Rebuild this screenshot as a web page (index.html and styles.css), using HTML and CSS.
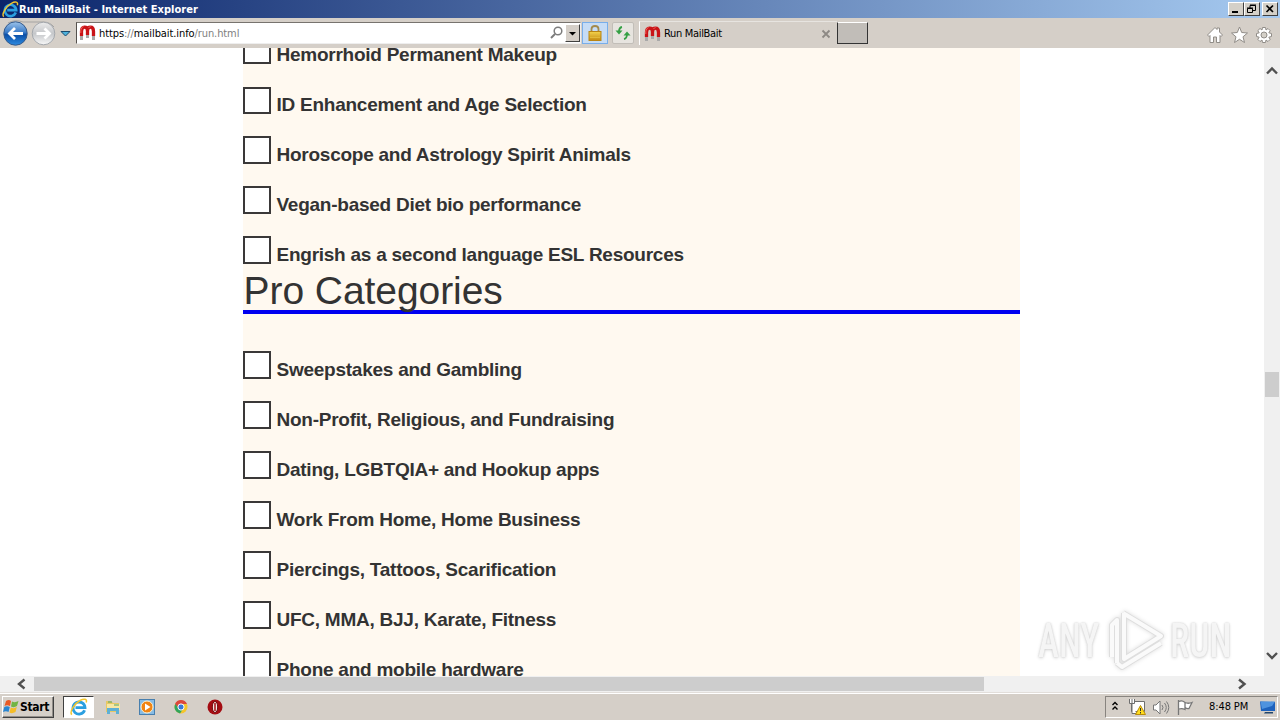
FILE: index.html
```html
<!DOCTYPE html>
<html lang="en">
<head>
<meta charset="utf-8">
<title>Run MailBait - Internet Explorer</title>
<link rel="stylesheet" href="styles.css">
</head>
<body>
<svg width="0" height="0" class="defs">
  <defs>
    <linearGradient id="blue" x2="0" y2="1"><stop stop-color="#9cc3ea"/><stop offset=".45" stop-color="#3a7bc8"/><stop offset=".55" stop-color="#0b4fa8"/><stop offset="1" stop-color="#2d8be0"/></linearGradient>
    <linearGradient id="pale" x2="0" y2="1"><stop stop-color="#ececec"/><stop offset=".5" stop-color="#c5c7ca"/><stop offset="1" stop-color="#f8f8f8"/></linearGradient>
    <linearGradient id="gold" x2="0" y2="1"><stop stop-color="#f3d34c"/><stop offset="1" stop-color="#c48a10"/></linearGradient>
    <symbol id="ie" viewBox="0 0 18 18">
      <path d="M14.6 12.2A6 6 0 1 1 15 9.6H5.5" fill="none" stroke="#2b9fe0" stroke-width="2.8"/>
      <path d="M1.8 16.6C-.8 14 4.500 5.500 10 2.500C14 .2 17.500.8 16.200 4.500" fill="none" stroke="#f2c52e" stroke-width="1.500"/>
    </symbol>
    <symbol id="magnet" viewBox="0 0 16 16">
      <path d="M2 11V6.500Q2 2.200 5 2.200T8 6V10V6Q8 2.200 11 2.200T14 6.500V11" fill="none" stroke="#c91418" stroke-width="3.300"/>
      <path d="M2 11V15M8 10V13M14 11V15" stroke="#a9a9a9" stroke-width="3"/>
      <path d="M1.300 8V5Q2 2 4 1.500M9 3Q10 1.500 11 1.500" fill="none" stroke="#f0635c"/>
    </symbol>
  </defs>
</svg>
<div class="screen">
  <header class="titlebar">
    <svg class="title-icon" width="17" height="17"><use href="#ie"/></svg>
    <span class="title">Run MailBait - Internet Explorer</span>
    <div class="window-buttons">
      <span class="wb"><svg width="14" height="12"><path d="M3 9H9" stroke="#000" stroke-width="2"/></svg></span>
      <span class="wb"><svg width="14" height="12"><path d="M5 5V2.500H10.500V7.500H8M2.500 5.500H7.500V9.500H2.500ZM5 2H11M2 5H8" fill="none" stroke="#000"/></svg></span>
      <span class="wb wb-close"><svg width="14" height="12"><path d="M3.500 2.500L10 9M10 2.500L3.500 9" stroke="#000" stroke-width="1.700"/></svg></span>
    </div>
  </header>
  <nav class="toolbar">
    <svg class="nav-buttons" width="76" height="30">
      <path d="M8 5Q15 1 23 4H43Q50 4 54 9" fill="none" stroke="#a5a4a3"/>
      <circle cx="15.500" cy="15.500" r="11.700" fill="url(#blue)" stroke="#345a8c"/>
      <path d="M23 15.500H10M15 10L9.500 15.500L15 21" fill="none" stroke="#fff" stroke-width="2.800"/>
      <circle cx="43.500" cy="15.500" r="11.300" fill="url(#pale)" stroke="#a4a8ad"/>
      <path d="M36.500 15.500H49M44.500 10.500L49.500 15.500L44.500 20.500" fill="none" stroke="#fff" stroke-width="2.800"/>
      <path d="M61 13.500H70L65.500 18Z" fill="#4eb2dc" stroke="#1b4a6d"/>
    </svg>
    <div class="address">
      <svg width="17" height="16"><use href="#magnet"/></svg>
      <span class="url"><i>https</i>://<i>mailbait.info</i>/run.html</span>
      <svg class="search" width="15" height="16"><circle cx="9" cy="6" r="3.800" fill="none" stroke="#7c7c7c" stroke-width="1.500"/><path d="M6 9L2 13" stroke="#7c7c7c" stroke-width="2"/></svg>
      <span class="drop"><svg width="11" height="13"><path d="M2 5H9L5.500 8.500Z"/></svg></span>
    </div>
    <span class="lock"><svg width="16" height="18"><path d="M4.500 8V5Q4.500 2 8 2T11.500 5V8" fill="none" stroke="#a38a4c" stroke-width="1.800"/><rect x="2" y="7.500" width="12" height="9" fill="url(#gold)" stroke="#b98514"/><path d="M3 10.500H13M3 13.500H13" stroke="#e2b93b"/></svg></span>
    <span class="refresh"><svg width="18" height="18"><path d="M8 3Q5 3.500 5 8M10 15Q13 14.500 13 10" fill="none" stroke="#35a044" stroke-width="1.800"/><path d="M1.500 6.500H8.500L5 10.500ZM9.500 11.500H16.500L13 7.500Z" fill="#35a044"/></svg></span>
    <div class="tab">
      <svg width="17" height="16"><use href="#magnet"/></svg>
      <span class="tab-title">Run MailBait</span>
      <svg width="10" height="10"><path d="M1.500 1.500L8.500 8.500M8.500 1.500L1.500 8.500" stroke="#8d8984" stroke-width="1.800"/></svg>
    </div>
    <span class="new-tab"></span>
    <svg class="tools" width="70" height="22">
      <g fill="#fff" stroke="#908c87">
        <path d="M1.500 11L9 3.500L11 5.500V4H13.500V8L16.500 11L15 12.500L14 11.500V18.500H10.500V13H7.500V18.500H4V11.500L3 12.500Z"/>
        <path d="M33.500 3L35.700 8.500L41.500 9L37 12.800L38.500 18.500L33.500 15.300L28.500 18.500L30 12.800L25.500 9L31.300 8.500Z"/>
        <path d="M56.500 3.500H59.500L60 6L62 4.500L64.200 6.700L62.800 8.800L65.500 9.500V12.500L62.800 13.200L64.200 15.300L62 17.500L60 16L59.500 18.500H56.500L56 16L54 17.500L51.800 15.300L53.200 13.200L50.500 12.500V9.500L53.200 8.800L51.800 6.700L54 4.500L56 6Z"/>
        <circle cx="58" cy="11" r="3" fill="#d4d0c8"/>
      </g>
    </svg>
  </nav>
  <div class="viewport">
    <main class="page">
      <div class="column">
        <ul class="options first">
          <li><span class="box"></span><span class="label">Hemorrhoid Permanent Makeup</span></li>
          <li><span class="box short"></span><span class="label">ID Enhancement and Age Selection</span></li>
          <li><span class="box"></span><span class="label">Horoscope and Astrology Spirit Animals</span></li>
          <li><span class="box"></span><span class="label">Vegan-based Diet bio performance</span></li>
          <li><span class="box"></span><span class="label">Engrish as a second language ESL Resources</span></li>
        </ul>
        <h1>Pro Categories</h1>
        <ul class="options">
          <li><span class="box"></span><span class="label">Sweepstakes and Gambling</span></li>
          <li><span class="box"></span><span class="label">Non-Profit, Religious, and Fundraising</span></li>
          <li><span class="box"></span><span class="label">Dating, LGBTQIA+ and Hookup apps</span></li>
          <li><span class="box"></span><span class="label">Work From Home, Home Business</span></li>
          <li><span class="box"></span><span class="label">Piercings, Tattoos, Scarification</span></li>
          <li><span class="box"></span><span class="label">UFC, MMA, BJJ, Karate, Fitness</span></li>
          <li><span class="box"></span><span class="label">Phone and mobile hardware</span></li>
        </ul>
      </div>
      <div class="watermark">
        <span class="any">ANY</span>
        <svg width="58" height="66" fill="none" stroke-linejoin="round">
          <g stroke="#dedede" stroke-width="6"><path d="M9 55V12L4 17V49M15 5L53 28L16 51V5M9 55L14 59L53 35"/></g>
          <g stroke="#fafafa" stroke-width="4"><path d="M9 55V12L4 17V49M15 5L53 28L16 51V5M9 55L14 59L53 35"/></g>
        </svg>
        <span class="run">RUN</span>
      </div>
    </main>
    <aside class="vscroll">
      <svg width="16" height="16"><path d="M3 11.500L8 6.500L13 11.500" fill="none" stroke="#505050" stroke-width="2.400"/></svg>
      <span class="vthumb"></span>
      <svg width="16" height="16"><path d="M3 6L8 11L13 6" fill="none" stroke="#505050" stroke-width="2.400"/></svg>
    </aside>
  </div>
  <div class="hscroll">
    <svg width="34" height="16"><path d="M24.500 3.500L19 8L24.500 12.500" fill="none" stroke="#505050" stroke-width="2.400"/></svg>
    <span class="hthumb"></span>
    <svg class="right-arrow" width="16" height="16"><path d="M5 3.500L10.500 8L5 12.500" fill="none" stroke="#505050" stroke-width="2.400"/></svg>
  </div>
  <footer class="taskbar">
    <span class="start">
      <svg width="17" height="17"><path d="M3 3Q6 1 8 3L7 8Q4 6.500 1.500 8Z" fill="#e95a24"/><path d="M9 3.500Q12 5 15.500 3L14 8Q11 10 8 8.500Z" fill="#72b544"/><path d="M1.300 9Q4 7.500 6.800 9L5.500 14Q3 12.500 0 14Z" fill="#2885d1"/><path d="M7.800 9.500Q11 11 13.800 9L12.500 14Q9 16 6.500 14.500Z" fill="#f5bd28"/></svg>
      <b>Start</b>
    </span>
    <span class="task active"><svg width="18" height="18"><use href="#ie"/></svg></span>
    <span class="task"><svg width="18" height="18"><path d="M2 3H7L9 5H15V14H2Z" fill="#e7c864"/><path d="M3 6H16V12H3Z" fill="#f7e7a4"/><path d="M3 16V10H15V16H12V13H6V16Z" fill="#5eb0d5"/><path d="M4 4H8M10 7H15" stroke="#52a46b"/></svg></span>
    <span class="task"><svg width="18" height="18"><rect x="1.500" y="1.500" width="15" height="15" fill="#87bce5" stroke="#487fae"/><circle cx="9" cy="9" r="6" fill="#f18412" stroke="#fff2d1"/><path d="M7 5.500L12.500 9L7 12.500Z" fill="#fff"/></svg></span>
    <span class="task"><svg width="18" height="18"><circle cx="9" cy="9" r="6.500" fill="#f5c52b"/><path d="M3 6A6.500 6.500 0 0 1 15 6H9L6 10Z" fill="#dc473b"/><path d="M3.300 6A6.500 6.500 0 0 0 8 15.500L11 11L6.500 10Z" fill="#31a45c"/><circle cx="9" cy="9" r="3.100" fill="#3879d9" stroke="#fff"/></svg></span>
    <span class="task"><svg width="18" height="18"><circle cx="9" cy="9" r="7.500" fill="#a40c12"/><ellipse cx="9" cy="9" rx="2.700" ry="5.500" fill="#f4e6e2" stroke="#6e080c"/><path d="M9 5V13" stroke="#a40c12" stroke-width="1.500"/></svg></span>
    <div class="tray">
      <svg width="103" height="20">
        <path d="M6.500 8L9 5.500L11.500 8M6.500 12.500L9 10L11.500 12.500" fill="none" stroke="#000" stroke-width="1.400"/>
        <g fill="#fff" stroke="#6e6e6e"><path d="M25.500 4.500H38.500V14.500H25.500Z"/><path d="M23.500 2V6.500H28.500V2M26 2V16.500H30"/></g>
        <path d="M34.500 8.500L39.500 17.500H29.500Z" fill="#ffdc1d" stroke="#b98c0c"/><path d="M34.500 11V14M34.500 15V16.500" stroke="#333"/>
        <path d="M47.500 8H50L54 4V17L50 13H47.500Z" fill="#fff" stroke="#777"/><path d="M56 8Q58 10.500 56 13M58.500 6Q62 10.500 58.500 15M60.500 4.500Q65 10.500 60.500 16.500" fill="none" stroke="#777"/>
        <path d="M72.500 3V18M73 4.500Q76 3 79 5.500V12.500Q76 11 73 12M79 5.500Q82 7 86 5.500L83 11.500Q81 12 79 10.500" fill="#fff" stroke="#777" stroke-width="1.300"/>
      </svg>
      <span class="clock">8:48 PM</span>
      <svg width="18" height="18"><path d="M1 3.500L16 4V13H2Z" fill="#1d62bd"/><path d="M1.500 3.500H16L13 8L3 11Z" fill="#4e93df"/><path d="M6 14H14V15.500H5Z" fill="#22466d"/></svg>
    </div>
  </footer>
</div>
</body>
</html>
```
FILE: styles.css
```css
* { box-sizing: border-box; }
body { margin: 0; font-family: "DejaVu Sans Condensed", "DejaVu Sans", sans-serif; font-stretch: condensed; font-size: 11px; color: #000; }
svg { display: block; flex: none; }
.defs { position: absolute; }
.screen { width: 1280px; height: 720px; display: flex; flex-direction: column; overflow: hidden; background: #fff; }

.titlebar { height: 18px; flex: none; display: flex; align-items: center; padding: 0 2px; background: linear-gradient(90deg, #0a246a, #a6caf0); }
.title-icon { overflow: hidden; }
.title { color: #fff; font-weight: bold; white-space: nowrap; letter-spacing: .04px; }
.window-buttons { margin-left: auto; display: flex; }
.wb { width: 16px; height: 14px; background: #d4d0c8; border: 1px solid; border-color: #fff #404040 #404040 #fff; }
.wb-close { margin-left: 2px; }

.toolbar { height: 30px; flex: none; display: flex; align-items: center; background: #d5cfc8; white-space: nowrap; }
.address { width: 505px; height: 22px; display: flex; align-items: center; padding-left: 2px; background: #fff; border: 1px solid; border-color: #77736e #eee #eee #55514d; }
.url { margin-left: 3px; color: #808080; letter-spacing: -.09px; }
.url i { color: #000; font-style: normal; }
.search { margin-left: auto; }
.drop { width: 15px; height: 18px; margin-left: 1px; padding: 2px 1px; background: #d5cfc8; border: 1px solid; border-color: #fff #404040 #404040 #fff; }
.lock { width: 26px; height: 22px; margin-left: 1px; padding: 1px 4px; background: #c6dcf5; border: 1px solid #78aeea; }
.refresh { width: 22px; height: 22px; margin-left: 4px; padding: 1px; background: #e7e4df; border: 1px solid #c2beb8; border-radius: 2px; }
.tab { width: 198px; height: 24px; margin-left: 5px; padding: 0 6px 0 4px; display: flex; align-items: center; border-left: 1px solid #fff; border-top: 1px solid #e7e4e0; }
.tab-title { flex: 1; margin-left: 3px; letter-spacing: -.32px; }
.new-tab { width: 31px; height: 22px; background: #c1bdb8; border: 1px solid; border-color: #fff #333 #333 #333; }
.tools { margin: 3px 4px 0 auto; }

.viewport { height: 628px; flex: none; display: flex; overflow: hidden; }
.page { width: 1264px; height: 628px; padding-left: 243px; position: relative; overflow: hidden; }
.column { width: 777px; height: 628px; overflow: hidden; background: #fff9f0; color: #333; font-family: "Liberation Sans", Arial, sans-serif; }
.options { list-style: none; margin: 0; padding: 0; }
.options.first { margin-top: -12px; height: 228px; }
.options li { height: 50px; display: flex; align-items: flex-start; }
.box { width: 28px; height: 28px; flex: none; background: #fff; border: 2px solid #3a3838; }
.box.short { height: 27px; margin-top: 1px; }
.label { margin: 7px 0 0 5.5px; font-size: 19px; line-height: 23px; font-weight: bold; white-space: nowrap; letter-spacing: -.25px; }
h1 { margin: 0 0 37px; padding: 7px 0 0 .5px; height: 50px; border-bottom: 4px solid #0000f0; font-weight: normal; font-size: 39px; line-height: 40px; letter-spacing: -.06px; }

.watermark { position: absolute; left: 1038px; top: 560px; display: flex; align-items: center; font-family: Roboto, sans-serif; font-weight: 500; font-size: 48px; line-height: 66px; color: #f5f5f5; text-shadow: 0 0 2px #ccc, 0 1px 4px #d5d5d5; }
.watermark span { width: 66px; white-space: nowrap; }
.watermark svg { margin: 0 4px; filter: drop-shadow(0 0 2px #ddd); }
.any, .run { transform: scaleX(.74); transform-origin: left; }

.vscroll { width: 16px; display: flex; flex-direction: column; background: #f0f0f0; padding: 14px 0 13px; }
.vthumb { width: 14px; height: 25px; margin: 294px 0 auto 1px; background: #cdcdcd; }
.hscroll { height: 16px; flex: none; display: flex; background: #f0f0f0; }
.hthumb { width: 950px; height: 14px; margin-top: 1px; background: #cdcdcd; }
.right-arrow { margin-left: 250px; }

.taskbar { height: 28px; flex: none; display: flex; align-items: center; padding: 2px 2px; background: #d5cfc8; border-top: 1px solid #e2deda; box-shadow: inset 0 1px #fff; }
.start { width: 52px; height: 22px; display: flex; align-items: center; padding-left: 0; border: 1px solid; border-color: #fff #404040 #404040 #fff; box-shadow: inset -1px -1px #928e89; }
.start b { font-size: 12px; letter-spacing: -.3px; }
.task { width: 30px; height: 22px; margin-left: 4px; display: flex; align-items: center; justify-content: center; }
.active { width: 31px; margin-left: 9px; background: #fff; border: 1px solid; border-color: #404040 #fff #fff #404040; }
.tray { width: 173px; height: 22px; margin-left: auto; display: flex; align-items: center; border: 1px solid; border-color: #88847f #fff #fff #88847f; }
.clock { width: 50px; white-space: nowrap; letter-spacing: -.1px; }
```
